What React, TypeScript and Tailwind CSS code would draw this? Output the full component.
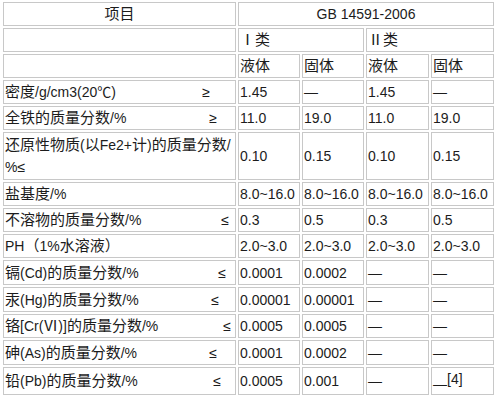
import React from 'react';

const cjk = /([\u2160-\u217f\u3000-\u303f\u4e00-\u9fff\uff00-\uffef]+)/;

const Txt: React.FC<{ s: string }> = ({ s }) => (
    <>
        {s.split(cjk).map((part, i) =>
            cjk.test(part) ? <span key={i} className="text-[15px]">{part}</span> : part
        )}
    </>
);

type Row = {
    label: string;
    sym?: string;
    symPad?: string;
    values: string[];
    h: string;
};

const rows: Row[] = [
    { label: '密度/g/cm3(20℃)', sym: '≥', symPad: 'pr-[24px]', values: ['1.45', '—', '1.45', '—'], h: 'h-[24px]' },
    { label: '全铁的质量分数/%', sym: '≥', symPad: 'pr-[17px]', values: ['11.0', '19.0', '11.0', '19.0'], h: 'h-[24px]' },
    { label: '', values: ['0.10', '0.15', '0.10', '0.15'], h: 'h-[48px]' },
    { label: '盐基度/%', values: ['8.0~16.0', '8.0~16.0', '8.0~16.0', '8.0~16.0'], h: 'h-[24px]' },
    { label: '不溶物的质量分数/%', sym: '≤', symPad: 'pr-[5px]', values: ['0.3', '0.5', '0.3', '0.5'], h: 'h-[24px]' },
    { label: 'PH（1%水溶液）', values: ['2.0~3.0', '2.0~3.0', '2.0~3.0', '2.0~3.0'], h: 'h-[24px]' },
    { label: '镉(Cd)的质量分数/%', sym: '≤', symPad: 'pr-[8px]', values: ['0.0001', '0.0002', '—', '—'], h: 'h-[25px]' },
    { label: '汞(Hg)的质量分数/%', sym: '≤', symPad: 'pr-[15px]', values: ['0.00001', '0.00001', '—', '—'], h: 'h-[25px]' },
    { label: '铬[Cr(Ⅵ)]的质量分数/%', sym: '≤', symPad: 'pr-[3px]', values: ['0.0005', '0.0005', '—', '—'], h: 'h-[24px]' },
    { label: '砷(As)的质量分数/%', sym: '≤', symPad: 'pr-[17px]', values: ['0.0001', '0.0002', '—', '—'], h: 'h-[25px]' },
];

const cell = 'border border-[#c8c8c8] px-[1px] align-middle';

const App: React.FC = () => {
    return (
        <div className="w-[500px] h-[398px] bg-white overflow-hidden pl-[1px]">
            <table
                className="table-fixed border-separate border-spacing-[2px] text-[14px] leading-[20px] text-[#1c1c1c]"
                style={{ fontFamily: '"Liberation Sans", Arial, "Noto Sans CJK SC", sans-serif' }}
            >
                <colgroup>
                    <col className="w-[233px]" />
                    <col className="w-[62px]" />
                    <col className="w-[62px]" />
                    <col className="w-[63px]" />
                    <col className="w-[63px]" />
                </colgroup>
                <tbody>
                    <tr className="h-[24px]">
                        <td className={`${cell} text-center`}><Txt s="项目" /></td>
                        <td colSpan={4} className={`${cell} text-center`}>GB 14591-2006</td>
                    </tr>
                    <tr className="h-[24px]">
                        <td className={cell}></td>
                        <td colSpan={2} className={cell}><Txt s="Ⅰ类" /></td>
                        <td colSpan={2} className={cell}><Txt s="Ⅱ类" /></td>
                    </tr>
                    <tr className="h-[24px]">
                        <td className={cell}></td>
                        <td className={cell}><Txt s="液体" /></td>
                        <td className={cell}><Txt s="固体" /></td>
                        <td className={cell}><Txt s="液体" /></td>
                        <td className={cell}><Txt s="固体" /></td>
                    </tr>
                    {rows.map((r, i) => (
                        <tr key={i} className={r.h}>
                            <td className={cell}>
                                {r.h === 'h-[48px]' ? (
                                    <div className="leading-[22px]">
                                        <Txt s="还原性物质(以Fe2+计)的质量分数/" />
                                        <br />
                                        %≤
                                    </div>
                                ) : (
                                    <div className={`flex items-center ${r.symPad ?? ''}`}>
                                        <span><Txt s={r.label} /></span>
                                        {r.sym && <span className="ml-auto">{r.sym}</span>}
                                    </div>
                                )}
                            </td>
                            {r.values.map((v, j) => (
                                <td key={j} className={cell}>{v}</td>
                            ))}
                        </tr>
                    ))}
                    <tr className="h-[28px]">
                        <td className={cell}>
                            <div className="flex items-center pr-[13px]">
                                <span><Txt s="铅(Pb)的质量分数/%" /></span>
                                <span className="ml-auto">≤</span>
                            </div>
                        </td>
                        <td className={cell}>0.0005</td>
                        <td className={cell}>0.001</td>
                        <td className={cell}>—</td>
                        <td className={cell}>
                            <span className="align-[-5px]">—</span>[4]
                        </td>
                    </tr>
                </tbody>
            </table>
        </div>
    );
};

export default App;
